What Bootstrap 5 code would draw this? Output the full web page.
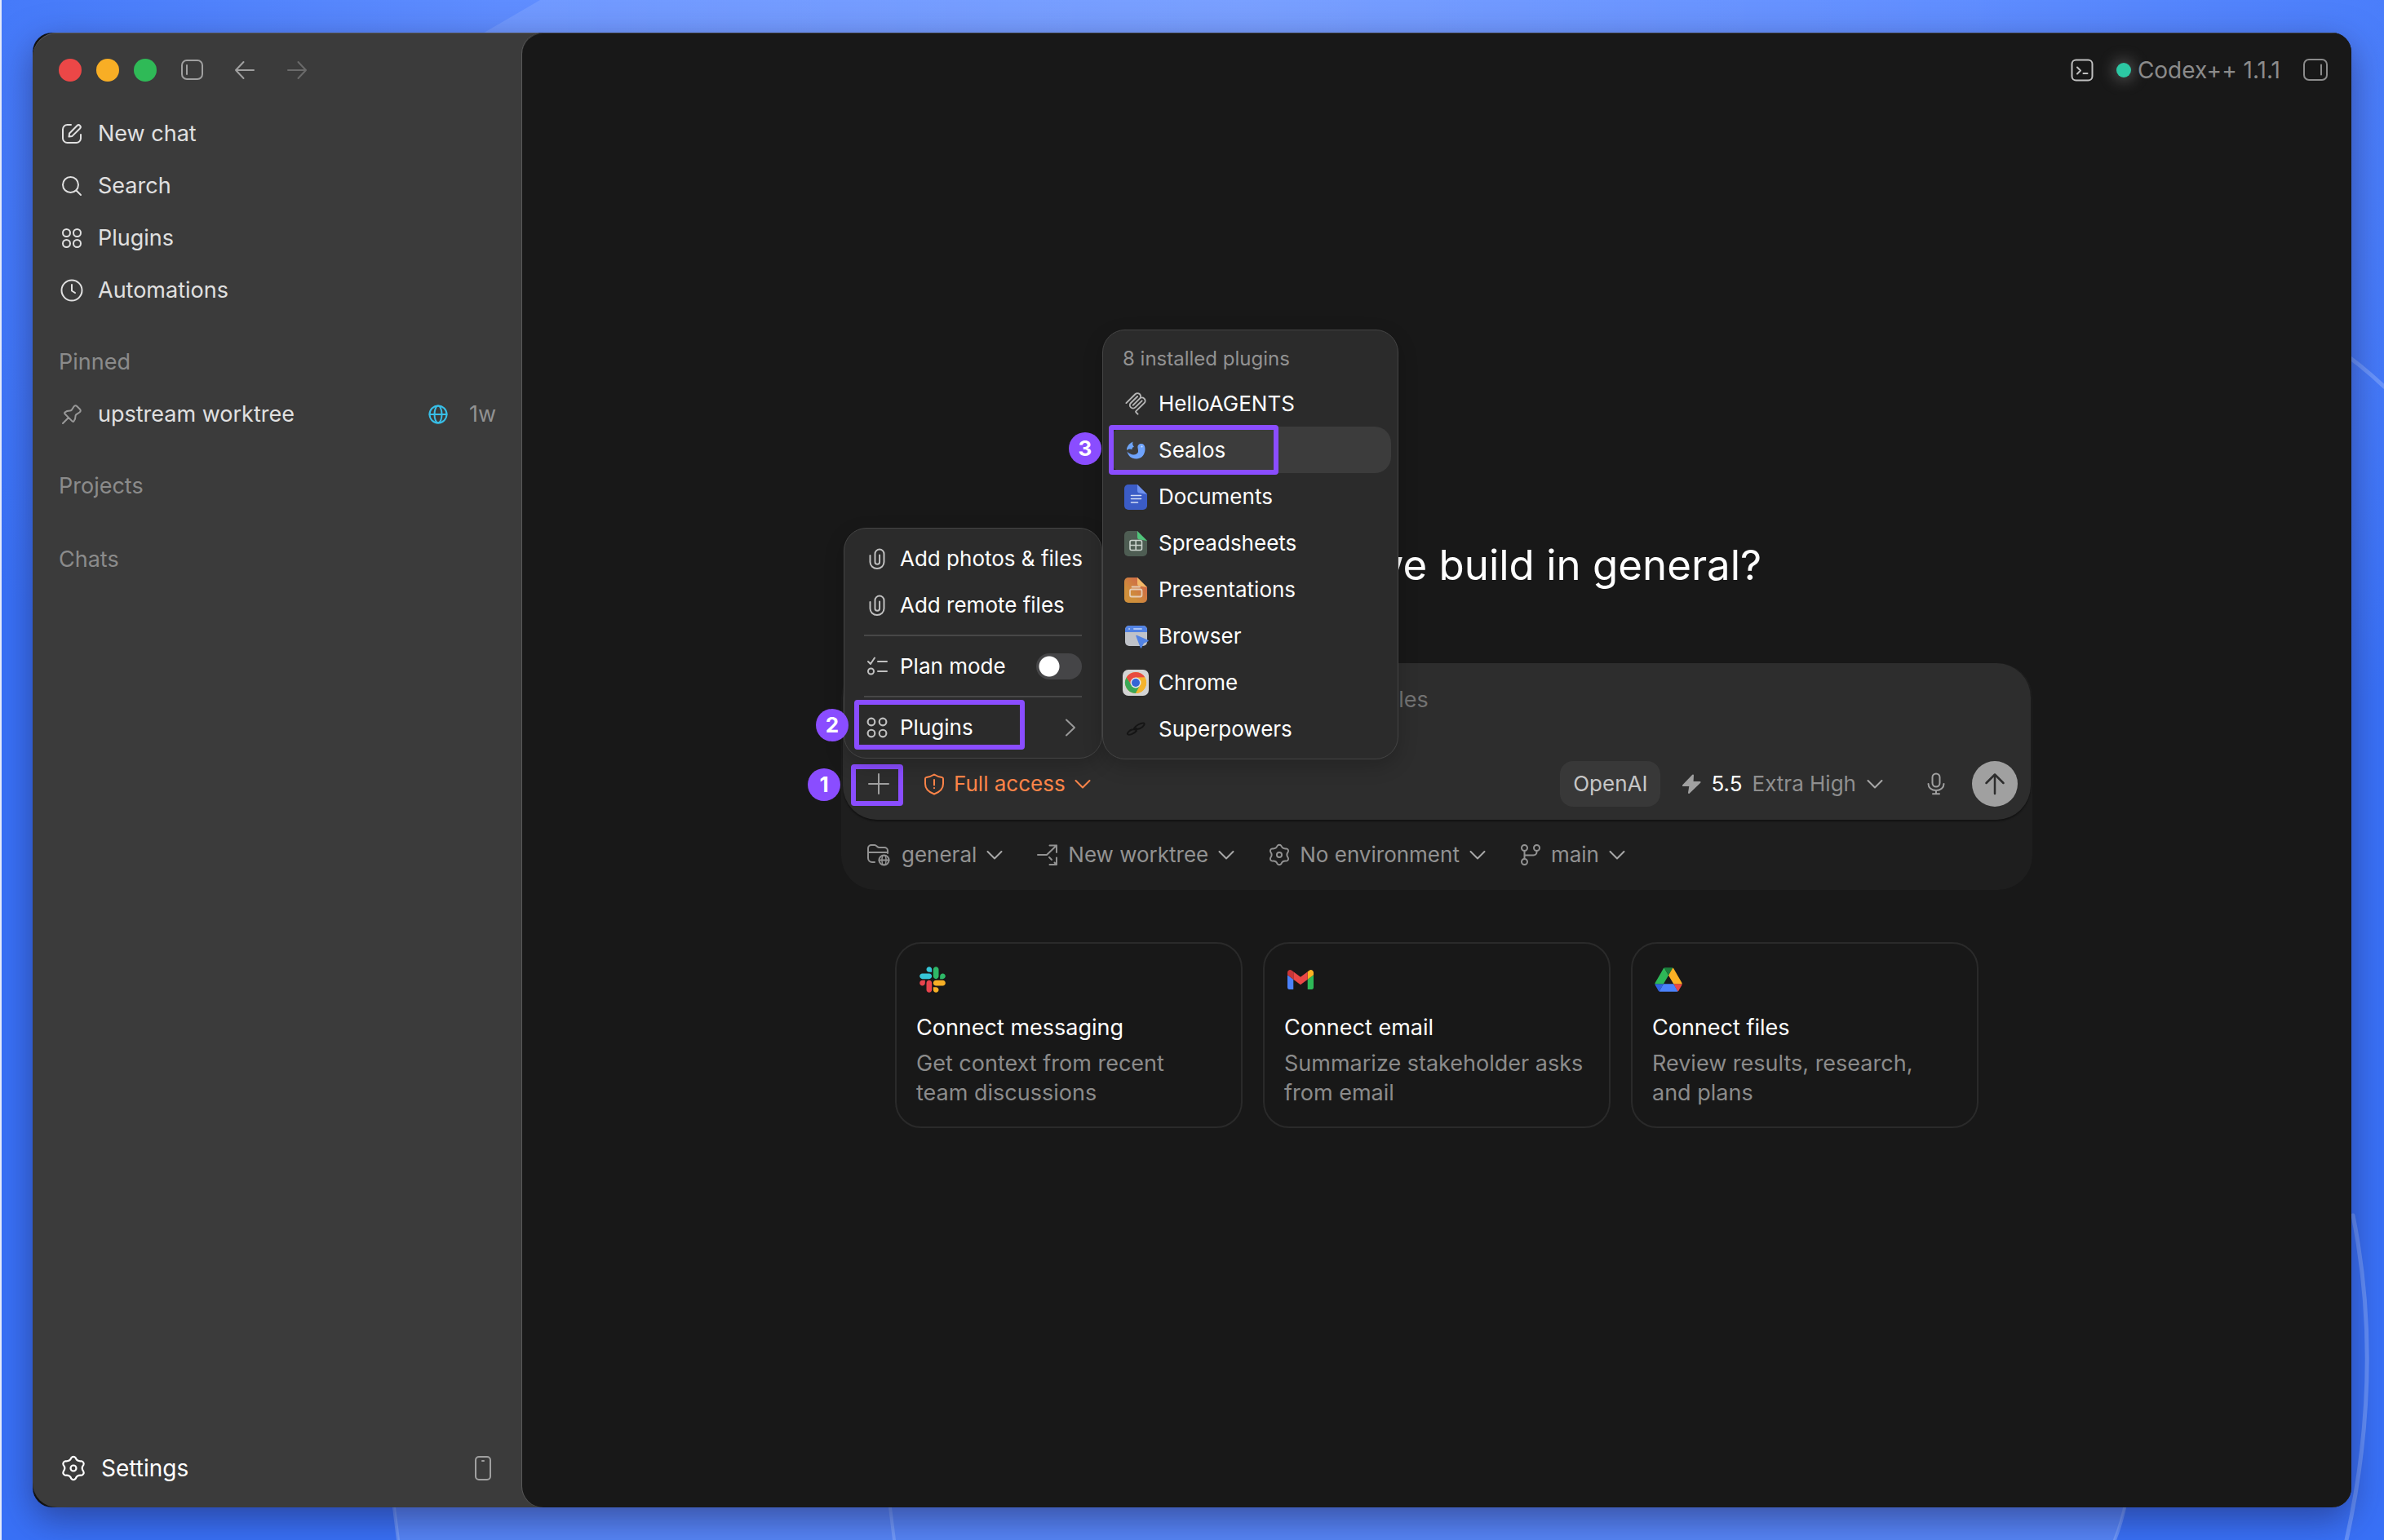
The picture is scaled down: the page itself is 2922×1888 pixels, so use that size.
<!DOCTYPE html>
<html lang="en" data-bs-theme="dark">
<head>
<meta charset="utf-8">
<meta name="viewport" content="width=device-width, initial-scale=1">
<title>Codex++</title>
<link href="https://cdn.jsdelivr.net/npm/bootstrap@5.3.0/dist/css/bootstrap.min.css" rel="stylesheet">
<style>
:root{--ink:#ececec;--dim:#8b8b8b;--panel:#181818;--side:#3b3b3b;--mark:#8a4dff}
body{font-family:Inter,"Liberation Sans",sans-serif;font-size:26px;line-height:36px;color:var(--ink);
  background:radial-gradient(ellipse 62% 70% at 52% 0,#719aff 0,#5f8dff 50%,transparent 100%),#3971f7;border-left:2px solid #e4eafb}
button{font:inherit;color:inherit;background:none;border:0;padding:0}
svg{flex:none;fill:none;stroke:currentColor;stroke-width:2;stroke-linecap:round;stroke-linejoin:round}
.i24{width:24px;height:24px}.i28{width:28px;height:28px}.i32{width:32px;height:32px}
.chev{width:22px;height:22px;color:#a8a8a8}
.desk{padding:40px 40px 40px 38px}
.wallpaper{position:absolute;inset:0;width:100%;height:100%;stroke:none}
.win{position:relative;background:#111;border-radius:24px;overflow:hidden;width:100%}
.winshade{border-radius:24px;box-shadow:0 14px 44px rgba(30,35,90,.55)}
.shell{background:var(--side);border-radius:30px 0 0 30px;box-shadow:inset 0 1px #555}
.side{width:600px;padding:24px 32px 20px;font-size:27px}
.lights{gap:18px}
.lights i{width:28px;height:28px;border-radius:50%}
.winbar{height:44px;color:#a0a0a0}
.side .nav{padding-top:24px}
.side .nav-link{color:#e0e0e0;height:64px;padding:0 0 0 2px;gap:18px;display:flex;align-items:center}
.side h2{font-size:27px;line-height:36px;font-weight:400;color:var(--dim);margin:38px 0 0}
.side h2.first{margin-bottom:14px}
.side h2.last{margin-top:54px}
.side .foot{height:56px;font-size:28px;padding-left:2px}
.stage{background:var(--panel);border-radius:26px 0 0 26px;box-shadow:-1px 0 #585858,inset 0 1px #3c3c3c}
.topbar{height:92px;padding:0 28px;color:var(--dim);font-size:28px}
.dot{width:18px;height:18px;border-radius:50%;background:#2cc8a4;box-shadow:0 0 18px 4px rgba(160,160,160,.4)}
.flowcol{width:1460px;max-width:100%;padding-top:529px}
.flowcol h1{font-size:51px;line-height:64px;font-weight:400;color:#fff;margin:0 0 88px}
.dock{background:#1e1e1e;border-radius:42px}
.composer{position:relative;background:#2d2d2d;border-radius:42px;margin:0 2px;height:192px;padding:27px 16px 16px 30px;box-shadow:0 2px 2px rgba(0,0,0,.4)}
.composer textarea{background:none;border:0;color:#fff;font-size:27px;resize:none;outline:0;width:100%;height:36px;padding:0;overflow:hidden;display:block}
.composer textarea::placeholder{color:#737373;opacity:1}
.pill{background:#383838;border-radius:16px;height:56px;padding:0 16px;color:#c6c6c6}
.send{width:56px;height:56px;border-radius:50%;background:#a0a0a0;color:#2d2d2d}
.warn{color:#ff8549}.warn .chev{color:inherit}
.ctx{height:86px;padding:0 31px;gap:40px;color:#929292}
.ctx button{gap:11px}
.suggest{width:1328px;max-width:100%;gap:25px;margin-top:64px}
.tile{flex:1 1 0;height:228px;border:2px solid #2a2a2a;border-radius:32px;padding:28px 12px 0 24px;color:var(--dim);font-size:27px;text-align:left;text-decoration:none;white-space:nowrap}
.tile strong{font-weight:400;color:#fff;margin:25px 0 8px;display:block}
.tile svg{stroke:none;width:40px;height:32px}
.pop{position:absolute;background:#2b2b2b;border:1px solid #454545;border-radius:28px;padding:8px 8px 9px;color:#fff;font-size:26px;z-index:2;box-shadow:0 8px 24px rgba(0,0,0,.2)}
.addmenu{left:1px;bottom:75px;width:317px}
.submenu{left:316px;bottom:-2px;width:363px;padding-bottom:8px}
.pop .entry{display:flex;align-items:center;width:100%;height:57px;border-radius:20px;color:#fff;text-decoration:none;position:relative;white-space:nowrap}
.addmenu>.entry{padding:0 16px 0 19px;gap:15px}
.addmenu>.entry>svg:first-child{color:#c0c0c0;width:26px;height:26px}
.submenu .entry{padding:0 16px;gap:12px}
.submenu .entry svg{width:32px;height:32px}
.submenu .entry.on{background:#3c3c3c}
.submenu .cap{height:53px;padding:9px 16px 0;font-size:24px;color:#929292}
.pop hr{margin:8px 16px;border-top:2px solid #484848;opacity:1}
.form-check-input.sw{width:56px;height:32px;margin:0;border:0;border-radius:16px;background:radial-gradient(circle at 16px 16px,#fff 12px,transparent 13px) #454547}
/* numbered walkthrough markers drawn over the controls */
.ring{position:absolute;border:6px solid var(--mark);border-radius:4px;pointer-events:none}
.num{position:absolute;width:40px;height:40px;border-radius:50%;background:var(--mark);color:#fff;font-weight:700;font-size:26px;line-height:40px;text-align:center}
.r3{left:-1px;top:-2px;width:208px;height:61px}.n3{left:-50px;top:7px}
.r2{left:4px;top:-5px;width:209px;height:61px}.n2{left:-43px;top:6px}
.plusbtn{position:relative;width:28px;height:28px;color:#a0a0a0}
.r1{left:-20px;top:-10px;width:64px;height:51px}.n1{left:-73px;top:-5px}
</style>
<script src="https://cdn.jsdelivr.net/npm/bootstrap@5.3.0/dist/js/bootstrap.bundle.min.js"></script>
</head>
<body>
<svg width="0" height="0" class="position-absolute" aria-hidden="true">
  <symbol id="chev" viewBox="0 0 22 22"><path d="M2.500 7l8.500 8.500L19.500 7"/></symbol>
  <symbol id="gear" viewBox="1 1 22 22"><path d="M10.200 3.200A2.300 2.300 0 0 1 13.800 3.200Q14.900 6.400 18.700 6A2.300 2.300 0 0 1 20.500 9.200Q18.200 12 20.500 14.800A2.300 2.300 0 0 1 18.700 18Q14.900 17.600 13.800 20.800A2.300 2.300 0 0 1 10.200 20.800Q9.100 17.600 5.300 18A2.300 2.300 0 0 1 3.500 14.800Q5.800 12 3.500 9.200A2.300 2.300 0 0 1 5.300 6Q9.100 6.400 10.200 3.200Z"/><circle cx="12" cy="12" r="2.400"/></symbol>
  <symbol id="four" viewBox="0 0 24 24"><circle cx="5.500" cy="5.500" r="4"/><circle cx="18.500" cy="5.500" r="4"/><circle cx="5.500" cy="18.500" r="4"/><circle cx="18.500" cy="18.500" r="4"/></symbol>
  <symbol id="clip" viewBox="0 0 26 26"><path d="M4.500 9v8a8.500 8 0 0 0 17 0V7a5.500 5.500 0 0 0-11 0v10a2.800 2.800 0 0 0 5.600 0V8.500"/></symbol>
</svg>
<svg class="wallpaper" viewBox="0 0 2922 1888" preserveAspectRatio="none" aria-hidden="true">
  <defs><linearGradient id="beam"><stop offset="0" stop-color="#fff" stop-opacity=".11"/><stop offset=".5" stop-color="#fff" stop-opacity=".06"/><stop offset="1" stop-color="#fff" stop-opacity="0"/></linearGradient></defs>
  <path d="M590 42L662 0H2500V42z" fill="url(#beam)"/>
  <path d="M482 1840L488 1888H2592L2608 1840z" fill="#8fb0f5" opacity=".35"/>
  <g fill="none" stroke="#8fb2ff" stroke-width="4" opacity=".5"><path d="M482 1840L488 1888M1090 1840L1096 1888M2606 1840Q2600 1868 2592 1888"/><path d="M2860 424Q2895 448 2922 474" stroke-width="5"/><path d="M2884 1490Q2922 1680 2876 1888" stroke-width="5"/></g>
</svg>
<div class="desk position-relative d-flex min-vh-100">
 <div class="winshade d-flex w-100">
 <div class="win d-flex">
  <div class="shell d-flex w-100">
   <aside class="side d-flex flex-column flex-shrink-0">
    <div class="winbar d-flex align-items-center">
      <div class="lights d-flex"><i style="background:#ec4747"></i><i style="background:#f8ae25"></i><i style="background:#2fba57"></i></div>
      <button aria-label="Toggle sidebar" class="d-flex ms-4 ps-1"><svg class="i32" viewBox="0 0 32 32"><rect x="3" y="4" width="25" height="23" rx="6"/><path d="M9 10v11"/></svg></button>
      <button aria-label="Back" class="d-flex ms-4 ps-2"><svg class="i32" viewBox="0 0 32 32"><path d="M27 16H5M14.500 6L5 16l9.500 10"/></svg></button>
      <button aria-label="Forward" class="d-flex ms-4 ps-2" style="color:#6a6a6a"><svg class="i32" viewBox="0 0 32 32"><path d="M5 16h22M17.500 6L27 16l-9.500 10"/></svg></button>
    </div>
    <nav class="nav flex-column flex-nowrap">
      <a class="nav-link" href="#"><svg class="i28" viewBox="0 0 28 28"><path d="M13 3H8.500A5.500 5.500 0 0 0 3 8.500v11A5.500 5.500 0 0 0 8.500 25h11a5.500 5.500 0 0 0 5.500-5.500V15"/><path d="M10.500 17.500l.6-4L20.500 4a2.400 2.400 0 0 1 3.500 3.500l-9.500 9.400z"/></svg>New chat</a>
      <a class="nav-link" href="#"><svg class="i28" viewBox="0 0 28 28"><circle cx="12.500" cy="12.500" r="9.500"/><path d="M19.500 19.500L25 25"/></svg>Search</a>
      <a class="nav-link" href="#"><svg class="i28" viewBox="0 0 28 28"><circle cx="7.500" cy="7.500" r="4.500"/><circle cx="20.500" cy="7.500" r="4.500"/><circle cx="7.500" cy="20.500" r="4.500"/><circle cx="20.500" cy="20.500" r="4.500"/></svg>Plugins</a>
      <a class="nav-link" href="#"><svg class="i28" viewBox="0 0 28 28"><circle cx="14" cy="14" r="12.500"/><path d="M14 7v7.500l4 2.500"/></svg>Automations</a>
    </nav>
    <h2 class="first">Pinned</h2>
    <a class="nav-link" href="#"><svg class="i28" style="color:#999" viewBox="0 0 28 28"><path d="M3 25l7-7M16.500 4.500c1-1.600 2.700-1.600 4-.3l3.300 3.300c1.300 1.300 1.300 3-.3 4l-4 2.600c-.8.600-1 1.200-1 2.200 0 3-.6 4.700-2 6.100-.7.600-1.400.600-2 0L5.600 13.500c-.6-.6-.6-1.300 0-2 1.400-1.400 3.100-2 6.100-2 1 0 1.600-.3 2.200-1z"/></svg>upstream worktree
      <svg class="i24 ms-auto" style="color:#38bfe8" viewBox="0 0 24 24"><circle cx="12" cy="12" r="10.500"/><ellipse cx="12" cy="12" rx="4.500" ry="10.500"/><path d="M1.500 12h21"/></svg><span class="ps-2" style="color:#929292">1w</span></a>
    <h2>Projects</h2>
    <h2 class="last">Chats</h2>
    <div class="foot d-flex align-items-center mt-auto">
      <button class="d-flex align-items-center text-white" style="gap:18px"><svg class="i32" viewBox="0 0 24 24" style="stroke-width:1.500"><use href="#gear"/></svg>Settings</button>
      <button class="d-flex ms-auto" aria-label="Connect phone" style="color:#a0a0a0"><svg class="i32" viewBox="0 0 32 32"><rect x="7" y="2" width="18" height="28" rx="4"/><path d="M15 7h2"/></svg></button>
    </div>
   </aside>
   <main class="stage flex-grow-1 d-flex flex-column align-items-center">
    <div class="topbar d-flex align-items-center justify-content-end w-100">
      <button class="d-flex" aria-label="Terminal" style="color:#c0c0c0"><svg class="i28" viewBox="0 0 28 28"><rect x="1.500" y="1.500" width="25" height="25" rx="5"/><path d="M8 10.500l4 4-4 4M15.500 18h5"/></svg></button>
      <span class="dot" style="margin:0 8px 0 28px"></span><span>Codex++ 1.1.1</span>
      <button class="d-flex" aria-label="Toggle panel" style="margin-left:27px"><svg class="i32" viewBox="0 0 32 32"><rect x="2" y="3" width="28" height="25" rx="6"/><path d="M23 9.500v12"/></svg></button>
    </div>
    <div class="flowcol d-flex flex-column align-items-center">
      <h1>What should we build in general?</h1>
      <div class="dock w-100">
       <div class="composer d-flex flex-column">
        <textarea rows="1" aria-label="Message" placeholder="Ask Codex anything. @ to use plugins or mention files"></textarea>
        <div class="d-flex align-items-center mt-auto">
          <button class="plusbtn d-flex" aria-label="Add"><svg class="i28" viewBox="0 0 28 28"><path d="M14 2v24M2 14h24"/></svg><span class="ring r1"></span><span class="num n1">1</span></button>
          <button class="warn d-flex align-items-center" style="margin-left:40px;gap:10px"><svg class="i28" viewBox="0 0 28 28"><path d="M14 2.500c3 2 6 3 9.500 3.500 1 .2 1.500.8 1.500 1.800V14c0 6-4 10-11 12.500C7 24 3 20 3 14V7.800c0-1 .5-1.600 1.500-1.800C8 5.500 11 4.500 14 2.500zM14 9v6.500M14 19v.2"/></svg>Full access<svg class="chev"><use href="#chev"/></svg></button>
          <button class="pill ms-auto">OpenAI</button>
          <button class="d-flex align-items-center" style="margin-left:26px;gap:12px;color:#8f8f8f"><svg class="i24" viewBox="2 2 24 24" style="fill:#a0a0a0;stroke:#a0a0a0"><path d="M16 3.500L4 16h8.500L11 25 24.500 12H15.500z"/></svg><span class="text-white">5.5</span><span>Extra High</span><svg class="chev"><use href="#chev"/></svg></button>
          <button class="d-flex" aria-label="Dictate" style="margin:0 30px 0 50px;color:#a0a0a0"><svg class="i28" viewBox="0 0 28 28"><rect x="9.500" y="1.500" width="9" height="16" rx="4.500"/><path d="M4.500 14c0 4.500 4 8 9.500 8s9.500-3.500 9.500-8M14 22v4M10 26.300h8"/></svg></button>
          <button class="send d-flex align-items-center justify-content-center" aria-label="Send"><svg class="i28" viewBox="0 0 28 28"><path d="M14 26V2.500M3.500 13L14 2.500 24.500 13" stroke-width="2.500"/></svg></button>
        </div>
        <div class="pop addmenu">
          <button class="entry"><svg><use href="#clip"/></svg>Add photos &amp; files</button>
          <button class="entry"><svg><use href="#clip"/></svg>Add remote files</button>
          <hr>
          <div class="entry"><svg viewBox="0 0 26 26"><path d="M2 7l3 3 5-7.500M14 7h11M14 19h11"/><circle cx="5.500" cy="19" r="3.500"/></svg><label for="plan">Plan mode</label><input id="plan" class="form-check-input sw ms-auto" type="checkbox" role="switch"></div>
          <hr>
          <button class="entry"><svg viewBox="0 0 24 24"><use href="#four"/></svg>Plugins<svg class="ms-auto i28" style="color:#999" viewBox="0 0 28 28"><path d="M9 4.500L19 14l-10 9.500"/></svg><span class="ring r2"></span><span class="num n2">2</span></button>
          <div class="pop submenu">
            <div class="cap">8 installed plugins</div>
            <a class="entry" href="#"><svg viewBox="-2 -2 28 28" style="fill:#b5b5b5;stroke:none"><path d="M15.688 2.343a2.588 2.588 0 00-3.610 0l-9.626 9.440a.863.863 0 01-1.203 0 .823.823 0 010-1.180l9.626-9.440a4.313 4.313 0 016.016 0 4.116 4.116 0 011.204 3.540 4.300 4.300 0 013.609 1.180l.05.05a4.115 4.115 0 010 5.900l-8.706 8.537a.274.274 0 000 .393l1.788 1.754a.823.823 0 010 1.180.863.863 0 01-1.203 0l-1.788-1.753a1.920 1.920 0 010-2.754l8.706-8.538a2.470 2.470 0 000-3.540l-.05-.049a2.588 2.588 0 00-3.607-.003l-7.172 7.034-.002.002-.098.097a.863.863 0 01-1.204 0 .823.823 0 010-1.180l7.273-7.133a2.470 2.470 0 00-.003-3.537z"/><path d="M14.485 4.703a.823.823 0 000-1.180.863.863 0 00-1.204 0l-7.119 6.982a4.115 4.115 0 000 5.900 4.314 4.314 0 006.016 0l7.120-6.982a.823.823 0 000-1.180.863.863 0 00-1.204 0l-7.119 6.982a2.588 2.588 0 01-3.610 0 2.470 2.470 0 010-3.540l7.120-6.982z"/></svg>HelloAGENTS</a>
            <a class="entry on" href="#"><svg viewBox="0 0 32 32" style="stroke:none"><path d="M5 16C5 11 8 8 12.500 5.500c-.8 3 0 4.500 1.500 6.500-2 .2-2.300 1-2.500 3-1.500-.8-4-1-6.500 1z" fill="#6ea5f8"/><path d="M5.500 17.500c3 3.500 8 5 11.500 3 3-1.800 2-4.500 1.500-7.500-.5-3 1.500-5 4.500-5s4.500 2.500 4.500 6.500C27.500 21 23.500 26.500 16.500 26.500 10.500 26.500 6.500 22.500 5.500 17.500z" fill="#6fa3fb"/><circle cx="23.500" cy="11.500" r="1" fill="#cfe0ff"/></svg>Sealos<span class="ring r3"></span><span class="num n3">3</span></a>
            <a class="entry" href="#"><svg viewBox="0 0 32 32" style="stroke:none"><path d="M2 6a5 5 0 0 1 5-5h11l12 12v14a5 5 0 0 1-5 5H7a5 5 0 0 1-5-5z" fill="#3b5cc6"/><path d="M18 1l12 12-9-1.500c-2 0-3-1-3-3z" fill="#7093ee"/><path d="M10.500 14.500h12M10.500 18.500h12M10.500 23h8" stroke="#d5def5" stroke-width="1.600"/></svg>Documents</a>
            <a class="entry" href="#"><svg viewBox="0 0 32 32" style="stroke:none"><path d="M2 6a5 5 0 0 1 5-5h11l12 12v14a5 5 0 0 1-5 5H7a5 5 0 0 1-5-5z" fill="#4e5d53"/><path d="M18 1l12 12-9-1.500c-2 0-3-1-3-3z" fill="#50c47a"/><path d="M11 12.500h10.500a2 2 0 0 1 2 2v8a2 2 0 0 1-2 2H11a2 2 0 0 1-2-2v-8a2 2 0 0 1 2-2zM16.200 12.500v12M9 18.500h14.500" stroke="#c9d3cc" stroke-width="1.600"/></svg>Spreadsheets</a>
            <a class="entry" href="#"><svg viewBox="0 0 32 32" style="stroke:none"><defs><linearGradient id="pg" x1="0" y1="1" x2="1" y2="0"><stop offset=".3" stop-color="#cf8f3b"/><stop offset="1" stop-color="#cf5b4c"/></linearGradient></defs><path d="M2 6a5 5 0 0 1 5-5h11l12 12v14a5 5 0 0 1-5 5H7a5 5 0 0 1-5-5z" fill="url(#pg)"/><path d="M18 1l12 12-9-1.500c-2 0-3-1-3-3z" fill="#f3b968"/><path d="M11 15.500h10.500a2 2 0 0 1 2 2v5a2 2 0 0 1-2 2H11a2 2 0 0 1-2-2v-5a2 2 0 0 1 2-2zM11.500 12.500h9.500" stroke="#e6cdb5" stroke-width="1.800"/></svg>Presentations</a>
            <a class="entry" href="#"><svg viewBox="0 0 32 32" style="stroke:none"><rect x="3" y="3" width="27" height="25" rx="5" fill="#bfc2c8"/><path d="M3 11V8a5 5 0 0 1 5-5h17a5 5 0 0 1 5 5v3z" fill="#5283e4"/><path d="M8 7h.2M14 7h9" stroke="#a9c2f5" stroke-width="2"/><path d="M17 15.500l14 6-5.500 2.500-3 6z" fill="#5283e4" stroke="#5283e4" stroke-width="1.500"/></svg>Browser</a>
            <a class="entry" href="#"><svg viewBox="0 0 32 32" style="stroke:none"><rect width="32" height="32" rx="7" fill="#d4d4d4"/><circle cx="16" cy="16" r="13" fill="#f4b32c"/><path d="M4.700 9.500A13 13 0 0 1 27.300 9.500L16 10 10.800 19z" fill="#e84a40"/><path d="M4.700 9.500A13 13 0 0 0 16 29l5.200-10-10.400 0z" fill="#3aa757"/><path d="M16 9.500h11.300A13 13 0 0 1 16 29l5.500-9.500z" fill="#f4b32c"/><circle cx="16" cy="16" r="6.500" fill="#e6e6e6"/><circle cx="16" cy="16" r="5" fill="#3565d6"/></svg>Chrome</a>
            <a class="entry" href="#"><svg viewBox="0 0 32 32" style="color:#151515;stroke-width:2"><path d="M14 15c2-3.500 8-7 12-6.500 1.500 1 0 4-4.500 6.500-2.500 1-4 1-6 1l-4 .5C8 17.500 5.500 20.500 6 22c1.500 2 8-.5 11-4"/><circle cx="16" cy="15.800" r="1"/></svg>Superpowers</a>
          </div>
        </div>
       </div>
       <div class="ctx d-flex align-items-center">
        <button class="d-flex align-items-center"><svg class="i32" viewBox="1 0 32 32"><path d="M11 25H8a5 5 0 0 1-5-5V8a4 4 0 0 1 4-4h4c2.500 0 3 3 6 3h6a4 4 0 0 1 4 4v3M3 13h23"/><circle cx="22.500" cy="22.500" r="6"/><ellipse cx="22.500" cy="22.500" rx="2.500" ry="6" stroke-width="1.500"/><path d="M16.500 22.500h12"/></svg><span>general</span><svg class="chev"><use href="#chev"/></svg></button>
        <button class="d-flex align-items-center"><svg class="i28" viewBox="0 0 28 28"><path d="M2 14h11L25 2.500M16.500 2.500H25V11M16 17l3 3M22.500 23.500L25 26M16.500 26H25V17.500"/></svg><span>New worktree</span><svg class="chev"><use href="#chev"/></svg></button>
        <button class="d-flex align-items-center"><svg class="i28" viewBox="0 0 24 24" style="stroke-width:1.500"><use href="#gear"/></svg><span>No environment</span><svg class="chev"><use href="#chev"/></svg></button>
        <button class="d-flex align-items-center"><svg class="i28" viewBox="0 0 28 28"><circle cx="6.500" cy="5.500" r="3.500"/><circle cx="21.500" cy="5.500" r="3.500"/><circle cx="6.500" cy="22.500" r="3.500"/><path d="M6.500 9v10M21.500 9v1.500a4 4 0 0 1-4 4h-11"/></svg><span>main</span><svg class="chev"><use href="#chev"/></svg></button>
       </div>
      </div>
      <div class="suggest d-flex">
        <a class="tile" href="#"><svg class="d-block" viewBox="0 0 127 127"><path fill="#e8444d" d="M27.200 80c0 7.300-5.900 13.200-13.200 13.200C6.700 93.200.8 87.300.8 80c0-7.300 5.900-13.200 13.200-13.200h13.200V80zm6.600 0c0-7.300 5.900-13.200 13.200-13.200 7.300 0 13.200 5.900 13.200 13.200v33c0 7.300-5.900 13.200-13.200 13.200-7.300 0-13.200-5.900-13.200-13.200V80z"/><path fill="#36c5d8" d="M47 27c-7.300 0-13.200-5.900-13.200-13.200C33.800 6.500 39.700.6 47 .6c7.300 0 13.200 5.900 13.200 13.200V27H47zm0 6.700c7.300 0 13.200 5.900 13.200 13.200 0 7.300-5.900 13.200-13.200 13.200H13.900C6.600 60.100.7 54.200.7 46.900c0-7.300 5.900-13.200 13.200-13.200H47z"/><path fill="#2eb867" d="M99.900 46.900c0-7.300 5.900-13.200 13.200-13.200 7.300 0 13.200 5.900 13.200 13.200 0 7.300-5.900 13.200-13.200 13.200H99.900V46.900zm-6.600 0c0 7.300-5.900 13.200-13.200 13.200-7.300 0-13.200-5.900-13.200-13.200V13.800C66.900 6.500 72.800.6 80.100.6c7.300 0 13.200 5.900 13.200 13.200v33.100z"/><path fill="#f6af26" d="M80.100 99.800c7.300 0 13.200 5.900 13.200 13.200 0 7.300-5.900 13.200-13.200 13.200-7.300 0-13.200-5.900-13.200-13.200V99.800h13.200zm0-6.600c-7.300 0-13.200-5.900-13.200-13.200 0-7.300 5.900-13.200 13.200-13.200h33.100c7.300 0 13.200 5.900 13.200 13.200 0 7.300-5.900 13.200-13.200 13.200H80.100z"/></svg><strong>Connect messaging</strong>Get context from recent<br>team discussions</a>
        <a class="tile" href="#"><svg class="d-block" viewBox="46 31 100 88"><path fill="#4b82fb" d="M58 108h14V74L52 59v43c0 3.320 2.690 6 6 6"/><path fill="#2eb857" d="M120 108h14c3.320 0 6-2.690 6-6V59l-20 15"/><path fill="#fbb124" d="M120 48v26l20-15v-8c0-7.420-8.470-11.650-14.400-7.200"/><path fill="#ea4745" d="M72 74V48l24 18 24-18v26L96 92"/><path fill="#c93638" d="M52 51v8l20 15V48l-5.600-4.200c-5.940-4.450-14.400-.22-14.400 7.200"/></svg><strong>Connect email</strong>Summarize stakeholder asks<br>from email</a>
        <a class="tile" href="#"><svg class="d-block" viewBox="-4 -3 95 84"><path fill="#2f62e0" d="m6.600 66.850 3.850 6.650c.8 1.400 1.950 2.500 3.300 3.300l13.750-23.800h-27.500c0 1.550.4 3.100 1.200 4.500z"/><path fill="#2eb857" d="m43.650 25-13.750-23.800c-1.350.8-2.500 1.900-3.300 3.300l-25.400 44a9.060 9.060 0 0 0-1.200 4.500h27.500z"/><path fill="#ea4745" d="m73.550 76.800c1.350-.8 2.500-1.900 3.300-3.300l1.600-2.750 7.650-13.250c.8-1.400 1.200-2.950 1.200-4.500h-27.502l5.852 11.500z"/><path fill="#1b7f3c" d="m43.650 25 13.750-23.800c-1.350-.8-2.900-1.200-4.500-1.200h-18.500c-1.600 0-3.150.45-4.500 1.200z"/><path fill="#4b82fb" d="m59.800 53h-32.300l-13.750 23.800c1.350.8 2.900 1.200 4.500 1.200h50.800c1.600 0 3.150-.45 4.500-1.200z"/><path fill="#fbb124" d="m73.400 26.500-12.700-22c-.8-1.400-1.950-2.500-3.300-3.300l-13.750 23.800 16.150 28h27.450c0-1.550-.4-3.100-1.200-4.500z"/></svg><strong>Connect files</strong>Review results, research,<br>and plans</a>
      </div>
    </div>
   </main>
  </div>
 </div>
 </div>
</div>
</body>
</html>
